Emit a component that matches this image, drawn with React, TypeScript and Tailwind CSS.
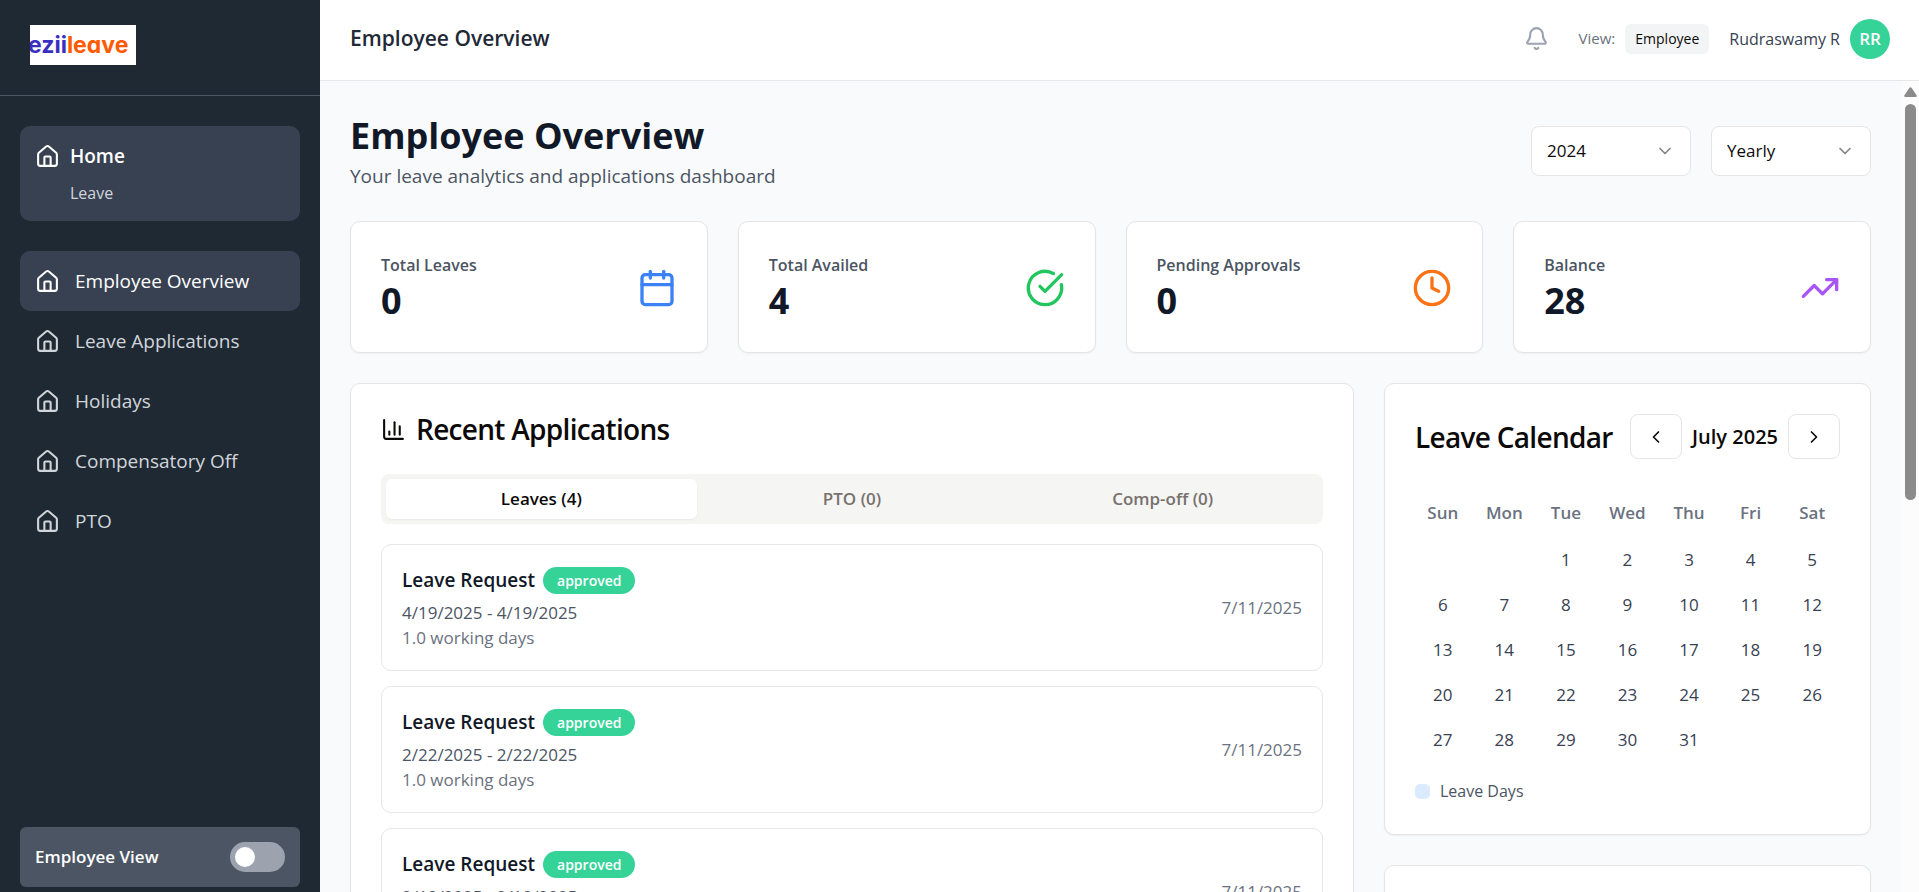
import { useState } from "react";
import {
  Bell,
  Calendar,
  ChartColumn,
  ChevronDown,
  ChevronLeft,
  ChevronRight,
  CircleCheckBig,
  Clock,
  House,
  TrendingUp,
} from "lucide-react";

const navItems = ["Employee Overview", "Leave Applications", "Holidays", "Compensatory Off", "PTO"];

const stats = [
  { label: "Total Leaves", value: 0, icon: Calendar, color: "text-[#3b82f6]" },
  { label: "Total Availed", value: 4, icon: CircleCheckBig, color: "text-[#22c55e]" },
  { label: "Pending Approvals", value: 0, icon: Clock, color: "text-[#f97316]" },
  { label: "Balance", value: 28, icon: TrendingUp, color: "text-[#a855f7]" },
];

const tabs = ["Leaves (4)", "PTO (0)", "Comp-off (0)"];

const requests = [
  { range: "4/19/2025 - 4/19/2025", days: "1.0 working days", applied: "7/11/2025" },
  { range: "2/22/2025 - 2/22/2025", days: "1.0 working days", applied: "7/11/2025" },
  { range: "2/19/2025 - 2/19/2025", days: "1.0 working days", applied: "7/11/2025" },
];

const weekdays = ["Sun", "Mon", "Tue", "Wed", "Thu", "Fri", "Sat"];

const weeks: (number | null)[][] = [0, 1, 2, 3, 4].map((week) =>
  weekdays.map((_, day) => {
    const date = week * 7 + day - 1;
    return date >= 1 && date <= 31 ? date : null;
  }),
);

function Sidebar() {
  const [managerView, setManagerView] = useState(false);
  return (
    <aside className="flex w-80 shrink-0 flex-col bg-[#1f2933] text-white">
      <div className="border-b border-[#4b5563] px-[30px] pt-[25px] pb-[30px]">
        <div className="flex h-10 w-[106px] items-center overflow-hidden bg-white">
          <span className="-ml-[2px] font-['Inter',sans-serif] text-[23px] leading-none font-bold text-[#3a2fc0] [font-feature-settings:'cv11']">
            ezii<span className="text-[#ff5a00]">leave</span>
          </span>
        </div>
      </div>
      <nav className="px-5 pt-[30px]">
        <a href="#home" className="block rounded-[10px] bg-[#374151] p-[15px]">
          <span className="flex items-center gap-[10px]">
            <House size={25} />
            <span className="text-[19px] leading-[30px] font-semibold">Home</span>
          </span>
          <span className="mt-[10px] block pl-[35px] text-[16px] leading-[25px] text-[#d1d5db]">Leave</span>
        </a>
        <ul className="mt-[30px]">
          {navItems.map((item, i) => (
            <li key={item}>
              <a
                href="#"
                className={
                  i === 0
                    ? "flex h-[60px] items-center gap-[15px] rounded-[10px] bg-[#374151] px-[15px] text-[19px] text-white"
                    : "flex h-[60px] items-center gap-[15px] rounded-[10px] px-[15px] text-[19px] text-[#d1d5db]"
                }
              >
                <House size={25} />
                {item}
              </a>
            </li>
          ))}
        </ul>
      </nav>
      <div className="mx-5 mt-auto mb-[5px] flex h-[60px] items-center justify-between rounded-md bg-[#4b5563] px-[15px]">
        <span id="view-label" className="text-[17px] font-semibold">Employee View</span>
        <button
          type="button"
          role="switch"
          aria-checked={managerView}
          aria-labelledby="view-label"
          onClick={() => setManagerView(!managerView)}
          className={
            managerView
              ? "flex h-[30px] w-[55px] items-center justify-end rounded-full bg-[#36d399] px-[5px]"
              : "flex h-[30px] w-[55px] items-center rounded-full bg-[#9ca3af] px-[5px]"
          }
        >
          <span className="size-5 rounded-full bg-white" />
        </button>
      </div>
    </aside>
  );
}

function TopBar() {
  return (
    <header className="flex h-[81px] shrink-0 items-center justify-between border-b border-[#e5e7eb] bg-white pr-[29px] pb-[3px] pl-[30px]">
      <h2 className="text-[21px] font-semibold text-[#1f2937]">Employee Overview</h2>
      <div className="flex items-center">
        <button type="button" aria-label="Notifications" className="text-[#9ca3af]">
          <Bell size={25} />
        </button>
        <span className="ml-[30px] text-[15px] text-[#6b7280]">View:</span>
        <span className="ml-[10px] flex h-[30px] items-center rounded-md bg-[#f3f4f6] px-[10px] text-[14px] text-[#0c0a09]">
          Employee
        </span>
        <span className="ml-5 text-[16px] text-[#374151]">Rudraswamy R</span>
        <span className="ml-[10px] flex size-10 items-center justify-center rounded-full bg-[#36d399] text-[17px] font-semibold text-white">
          RR
        </span>
      </div>
    </header>
  );
}

function Select({ label, options }: { label: string; options: string[] }) {
  return (
    <div className="relative">
      <select
        aria-label={label}
        className="h-[50px] w-40 appearance-none rounded-lg border border-[#e7e5e4] bg-white px-[15px] text-[17px] text-[#0c0a09]"
      >
        {options.map((o) => (
          <option key={o}>{o}</option>
        ))}
      </select>
      <ChevronDown
        size={20}
        strokeWidth={2}
        className="pointer-events-none absolute top-[15px] right-4 text-[#858483]"
      />
    </div>
  );
}

function StatCards() {
  return (
    <div className="grid grid-cols-4 gap-[30px]">
      {stats.map(({ label, value, icon: Icon, color }) => (
        <div
          key={label}
          className="flex items-center justify-between rounded-[10px] border border-[#e7e5e4] bg-white px-[30px] pt-[31px] pb-[29px] shadow-xs"
        >
          <div>
            <p className="text-[16px] leading-[25px] font-semibold text-[#4b5563]">{label}</p>
            <p className="text-[36px] leading-[45px] font-bold text-[#111827]">{value}</p>
          </div>
          <Icon size={40} className={color} />
        </div>
      ))}
    </div>
  );
}

function RecentApplications() {
  const [active, setActive] = useState(0);
  return (
    <section className="col-span-2 rounded-[10px] border border-[#e7e5e4] bg-white px-[30px] pb-[30px] shadow-xs">
      <h3 className="flex items-center gap-[10px] py-[30px] text-[28px] leading-[30px] font-semibold tracking-tight text-[#0c0a09]">
        <ChartColumn size={25} />
        Recent Applications
      </h3>
      <div role="tablist" className="grid h-[50px] grid-cols-3 rounded-lg bg-[#f5f5f4] p-[5px]">
        {tabs.map((tab, i) => (
          <button
            key={tab}
            type="button"
            role="tab"
            aria-selected={i === active}
            onClick={() => setActive(i)}
            className={
              i === active
                ? "rounded-md bg-white text-[17px] font-semibold text-[#0c0a09] shadow-xs"
                : "rounded-md text-[17px] font-semibold text-[#78716c]"
            }
          >
            {tab}
          </button>
        ))}
      </div>
      <ul className="mt-5 flex flex-col gap-[15px]">
        {requests.map((r) => (
          <li
            key={r.range}
            className="flex items-center justify-between rounded-[10px] border border-[#e5e7eb] p-5 text-[17px] leading-[25px]"
          >
            <div>
              <div className="flex h-[30px] items-center gap-2">
                <h4 className="text-[19px] font-semibold text-[#111827]">Leave Request</h4>
                <span className="rounded-full bg-[#36d399] px-[14px] text-[14px] leading-[27px] font-semibold text-white">
                  approved
                </span>
              </div>
              <p className="mt-[5px] text-[#4b5563]">{r.range}</p>
              <p className="text-[#6b7280]">{r.days}</p>
            </div>
            <span className="text-[#6b7280]">{r.applied}</span>
          </li>
        ))}
      </ul>
    </section>
  );
}

function LeaveCalendar() {
  const arrow =
    "flex h-[45px] w-[52px] items-center justify-center rounded-lg border border-[#e7e5e4] bg-white text-[#0c0a09]";
  return (
    <section className="rounded-[10px] border border-[#e7e5e4] bg-white p-[30px] shadow-xs">
      <div className="flex items-center justify-between">
        <h3 className="text-[28px] leading-[30px] font-semibold tracking-tight whitespace-nowrap text-[#0c0a09]">
          Leave Calendar
        </h3>
        <div className="flex items-center gap-[10px]">
          <button type="button" aria-label="Previous month" className={arrow}>
            <ChevronLeft size={20} />
          </button>
          <span className="text-[20px] font-semibold whitespace-nowrap text-[#0c0a09]">July 2025</span>
          <button type="button" aria-label="Next month" className={arrow}>
            <ChevronRight size={20} />
          </button>
        </div>
      </div>
      <div className="-mx-[3px] mt-[30px]">
        <table className="w-full table-fixed text-center text-[17px]">
          <thead>
            <tr>
              {weekdays.map((d) => (
                <th key={d} className="h-12 p-0 font-semibold text-[#6b7280]">
                  {d}
                </th>
              ))}
            </tr>
          </thead>
          <tbody>
            {weeks.map((week, i) => (
              <tr key={i}>
                {week.map((d, j) => (
                  <td key={j} className="h-[45px] p-0 text-[#374151]">
                    {d}
                  </td>
                ))}
              </tr>
            ))}
          </tbody>
        </table>
      </div>
      <div className="mt-[17px] flex items-center gap-[10px] text-[16px] leading-[25px] text-[#4b5563]">
        <span className="size-[15px] rounded-[5px] bg-[#dbeafe]" />
        Leave Days
      </div>
    </section>
  );
}

function ScrollTrack() {
  return (
    <div aria-hidden="true" className="flex w-[18px] shrink-0 flex-col items-center bg-[#fcfcfc] pt-[6px]">
      <svg width="13" height="10" viewBox="0 0 13 10" fill="#8b8b8b">
        <path d="M5.3 1.1Q6.5-.6 7.7 1.1L12.6 8.2Q13.200 10 11.600 10H1.400Q-.2 10 .4 8.200Z" />
      </svg>
      <div className="mt-[7px] h-[396px] w-[11px] rounded-full bg-[#8b8b8b]" />
    </div>
  );
}

export default function App() {
  return (
    <div className="flex h-screen overflow-hidden bg-[#f9fafb] font-['Open_Sans','Noto_Sans',sans-serif]">
      <Sidebar />
      <div className="flex min-w-0 flex-1 flex-col">
        <TopBar />
        <div className="flex min-h-0 flex-1">
          <main className="min-w-0 flex-1 overflow-hidden p-[30px]">
            <div className="mb-[30px] flex items-center justify-between">
              <div>
                <h1 className="text-[36px] leading-[50px] font-bold text-[#111827]">Employee Overview</h1>
                <p className="text-[19px] leading-[30px] text-[#4b5563]">
                  Your leave analytics and applications dashboard
                </p>
              </div>
              <div className="flex gap-5">
                <Select label="Year" options={["2024", "2025"]} />
                <Select label="Period" options={["Yearly", "Monthly"]} />
              </div>
            </div>
            <StatCards />
            <div className="mt-[30px] grid grid-cols-3 items-start gap-[30px]">
              <RecentApplications />
              <div className="flex flex-col gap-[30px]">
                <LeaveCalendar />
                <section className="h-60 rounded-[10px] border border-[#e7e5e4] bg-white shadow-xs" />
              </div>
            </div>
          </main>
          <ScrollTrack />
        </div>
      </div>
    </div>
  );
}
